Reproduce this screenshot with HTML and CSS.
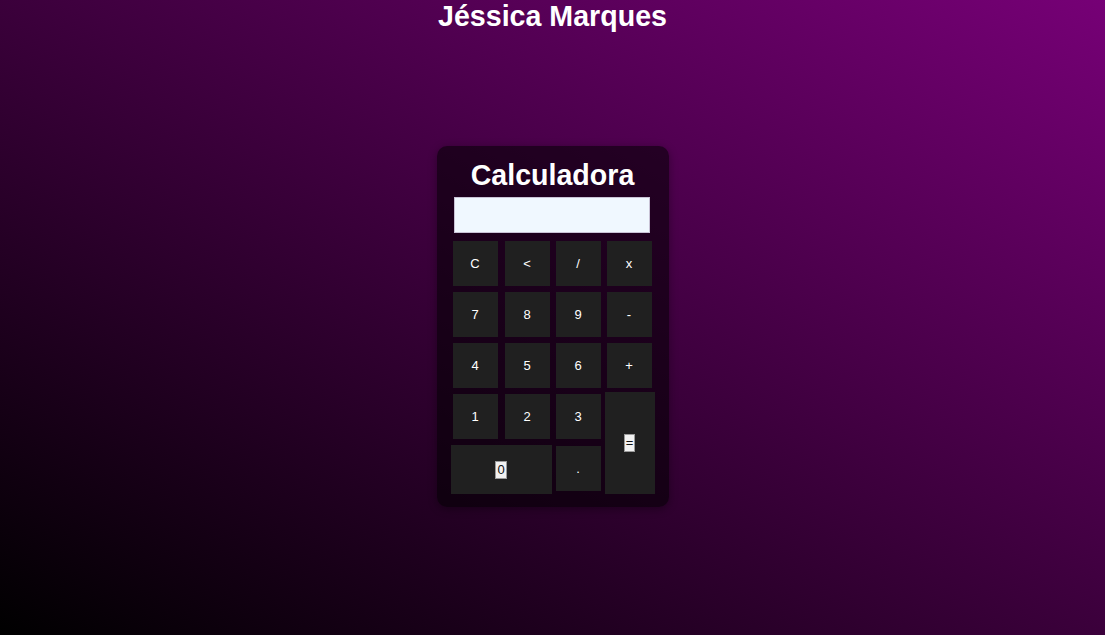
FILE: index.html
```html
<!DOCTYPE html>
<html lang="pt-BR">
<head>
<meta charset="utf-8">
<title>Calculadora</title>
<link rel="stylesheet" href="styles.css">
</head>
<body>
<h1 class="title">Jéssica Marques</h1>
<main class="stage">
  <div class="calc">
    <h2 class="calc-title">Calculadora</h2>
    <div class="display"></div>
    <div class="keys">
      <button class="key">C</button>
      <button class="key key-c2">&lt;</button>
      <button class="key">/</button>
      <button class="key">x</button>
      <button class="key">7</button>
      <button class="key key-c2">8</button>
      <button class="key">9</button>
      <button class="key">-</button>
      <button class="key">4</button>
      <button class="key key-c2">5</button>
      <button class="key">6</button>
      <button class="key">+</button>
      <button class="key">1</button>
      <button class="key key-c2">2</button>
      <button class="key">3</button>
      <button class="key key-eq"><span class="chip">=</span></button>
      <button class="key key-zero"><span class="chip">0</span></button>
      <button class="key key-dot">.</button>
    </div>
  </div>
</main>
</body>
</html>
```
FILE: styles.css
```css
html, body {
  margin: 0;
  height: 100%;
}
body {
  font-family: "Liberation Sans", Arial, sans-serif;
  background: linear-gradient(to top right, #000000, #760076);
  color: #fff;
  display: flex;
  flex-direction: column;
  align-items: center;
}
.title {
  margin: 0;
  font-size: 28.6px;
  font-weight: bold;
  line-height: 32px;
  color: #fff;
}
.stage {
  margin-top: 114px;
  display: flex;
  justify-content: center;
}
.calc {
  width: 200px;
  padding: 13px 16px 17px 16px;
  background: rgba(0, 0, 0, 0.55);
  border-radius: 10px;
  box-shadow: 0 2px 8px rgba(0, 0, 0, 0.35);
  display: flex;
  flex-direction: column;
}
.calc-title {
  margin: 0 0 5px 0;
  text-align: center;
  font-size: 28.6px;
  line-height: 33px;
  font-weight: bold;
  color: #fff;
}
.display {
  height: 34px;
  width: 194px;
  margin: 0 0 8px 1px;
  background: #f0f8ff;
  border: 1px solid #c9c3d6;
}
.keys {
  display: grid;
  grid-template-columns: 45px 46px 45px 45px;
  grid-template-rows: 45px 45px 45px 45px 45px;
  column-gap: 6px;
  row-gap: 6px;
}
.key {
  background: #202020;
  color: #fff;
  border: none;
  padding: 0;
  margin: 0;
  font-family: "Liberation Sans", Arial, sans-serif;
  font-size: 13px;
  display: flex;
  align-items: center;
  justify-content: center;
}
.key-c2 {
  margin-left: 1px;
}
.key-eq {
  grid-column: 4;
  grid-row: 4 / span 2;
  margin: -2px -3px -4px -2px;
}
.key-zero {
  grid-column: 1 / span 2;
  grid-row: 5;
  margin: 0 -2px -4px -2px;
}
.key-dot {
  grid-column: 3;
  grid-row: 5;
  margin: 1px 0 -1px 0;
}
.chip {
  background: #f2f2f2;
  color: #111;
  border: 1px solid #9a9a9a;
  padding: 1px 1px;
  line-height: 14px;
}
```
